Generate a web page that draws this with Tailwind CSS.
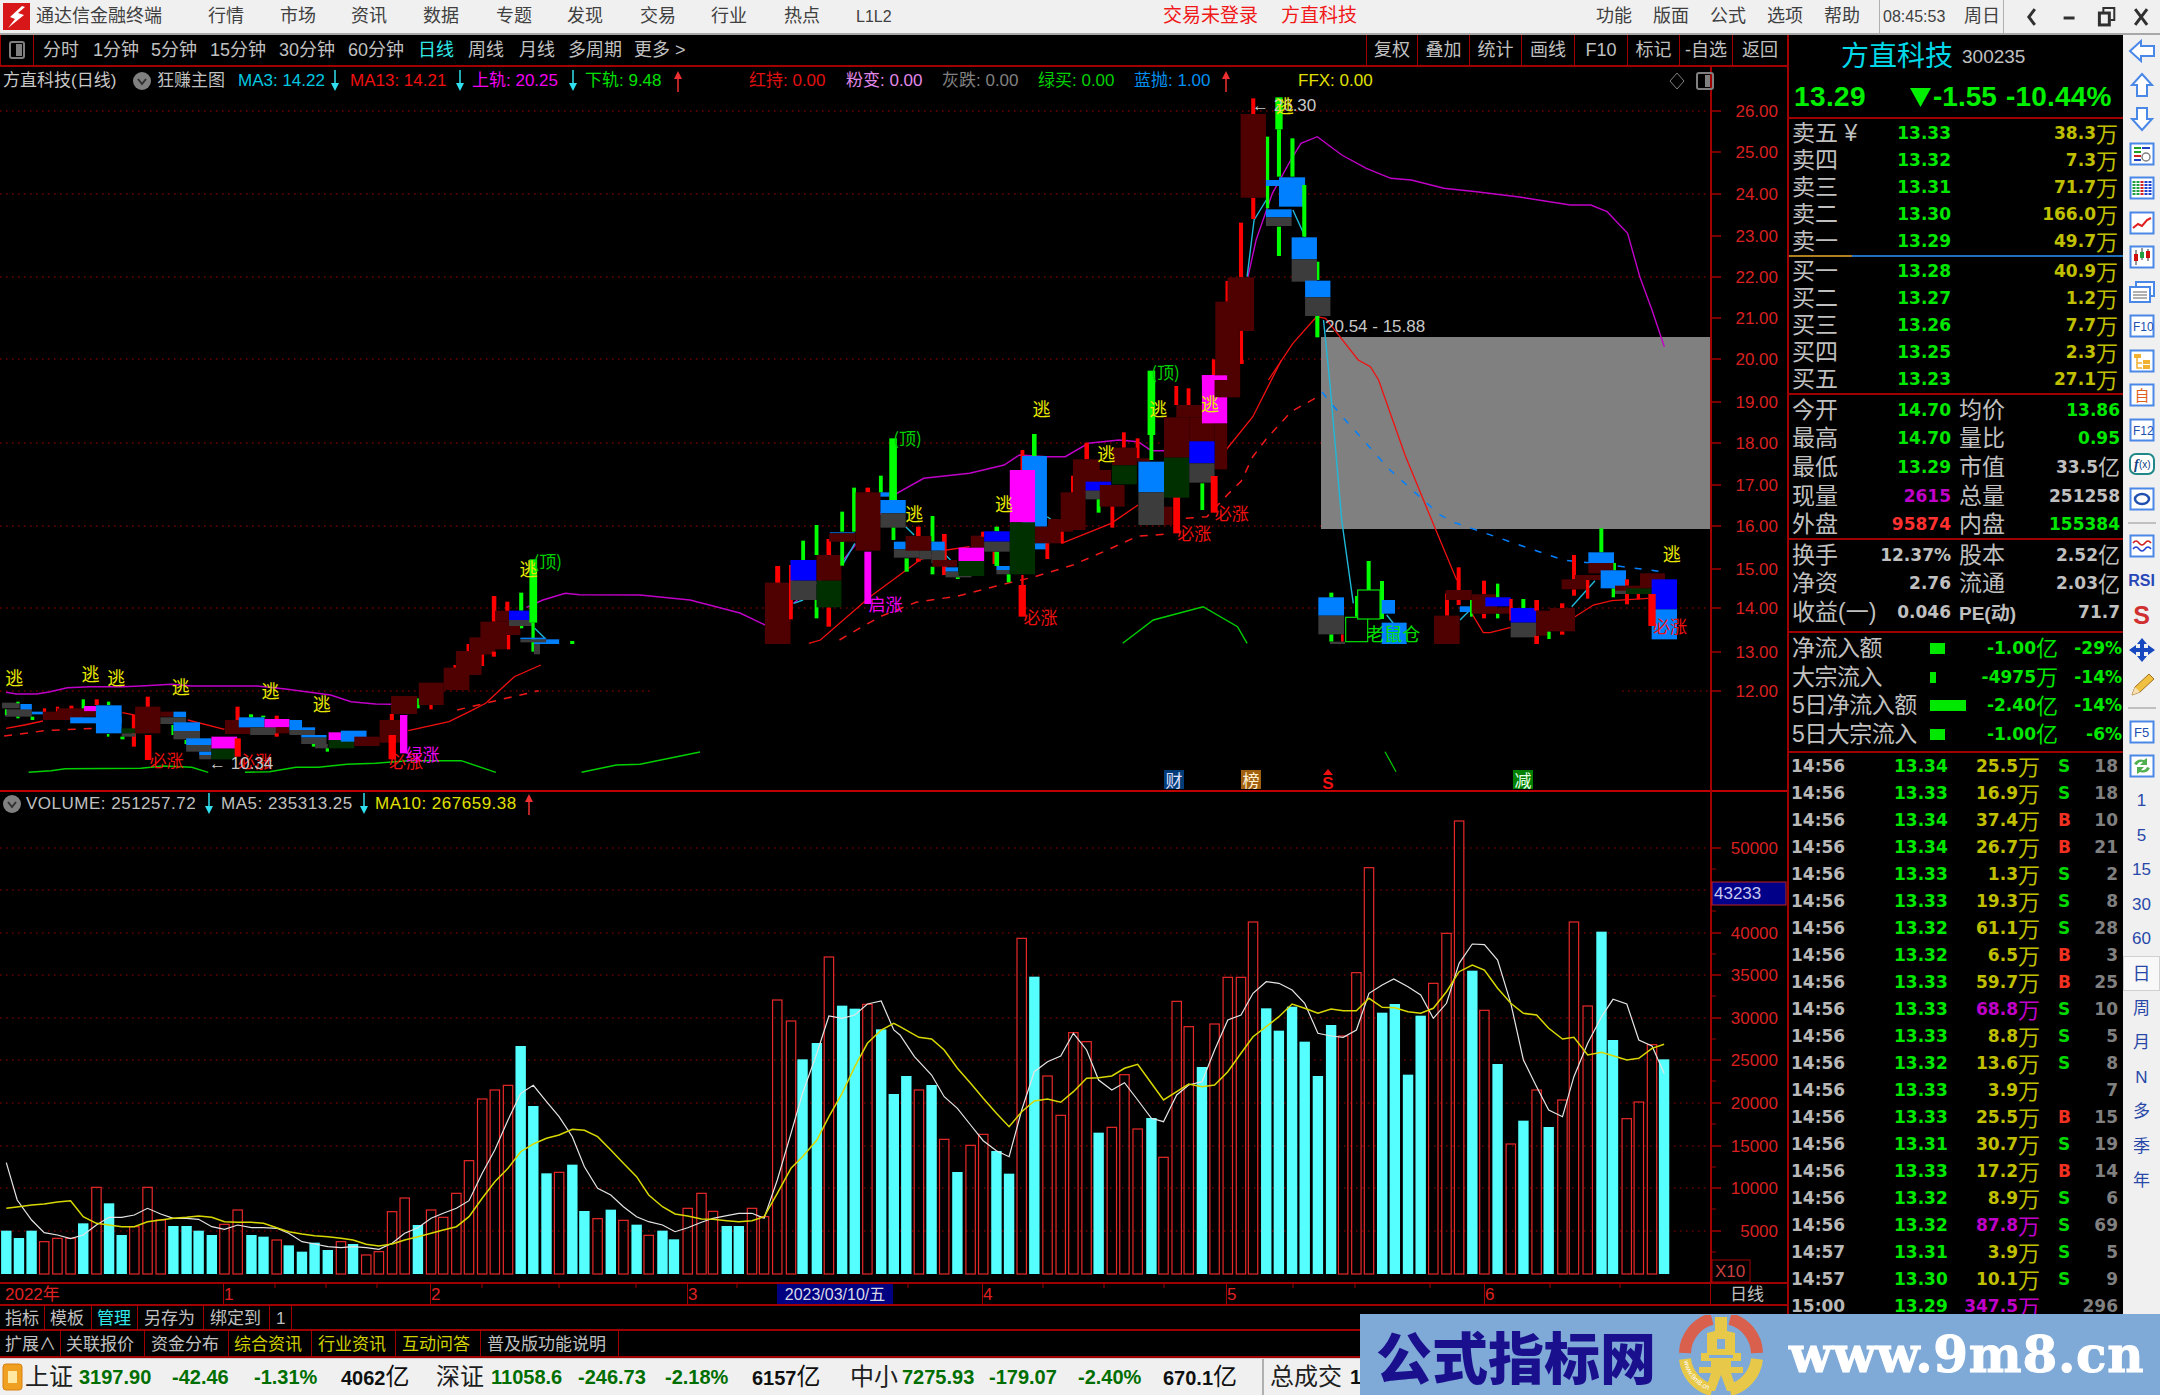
<!DOCTYPE html>
<html>

<head>
    <title>通达信金融终端</title>
    <script src="https://cdn.jsdelivr.net/npm/@tailwindcss/browser@4"></script>
</head>

<body class="bg-black">
    <div class="relative w-[2160px] h-[1395px] overflow-hidden flex flex-col bg-black text-[#c0c0c0] font-['Liberation_Sans','Noto_Sans_CJK_SC',sans-serif]">

        <!-- title bar -->
        <div class="h-[35px] flex items-center bg-[#f0f0f0] border-b-2 border-[#a8a8a8] text-[#404040] text-[18px] whitespace-nowrap">
            <div class="w-[36px] pl-[3px]">
                <svg class="w-[27px] h-[27px]" viewBox="0 0 27 27">
                    <rect width="27" height="27" fill="#d81818" />
                    <path d="M19 3 L7 14 L12 16 L5 25 L21 12 L15 10 L22 4Z" fill="#fff" />
                </svg>
            </div>
            <span class="w-[172px]">通达信金融终端</span>
            <span class="w-[72px]">行情</span>
            <span class="w-[71px]">市场</span>
            <span class="w-[72px]">资讯</span>
            <span class="w-[73px]">数据</span>
            <span class="w-[71px]">专题</span>
            <span class="w-[73px]">发现</span>
            <span class="w-[71px]">交易</span>
            <span class="w-[73px]">行业</span>
            <span class="w-[72px]">热点</span>
            <span class="w-[307px] text-[16px]">L1L2</span>
            <span class="w-[118px] text-[#f01818] text-[19px]">交易未登录</span>
            <span class="w-[315px] text-[#f01818] text-[19px]">方直科技</span>
            <span class="w-[57px]">功能</span>
            <span class="w-[57px]">版面</span>
            <span class="w-[57px]">公式</span>
            <span class="w-[57px]">选项</span>
            <span class="w-[55px]">帮助</span>
            <div class="w-[85px] h-full flex items-center border-l border-[#b0b0b0] pl-[3px] text-[16px]">08:45:53</div>
            <span class="w-[39px]">周日</span>
            <div class="w-[157px] h-full flex items-center border-l border-[#b0b0b0]">
                <svg class="w-[157px] h-[24px]" viewBox="0 0 157 24" fill="none" stroke="#303030" stroke-width="3">
                    <path d="M31 4 L25 12 L31 20" />
                    <path d="M60 13 H71" />
                    <rect x="96" y="8" width="10" height="12" />
                    <path d="M100 7 V3 H111 V15 H107" stroke-width="2" />
                    <path d="M132 4 L144 20 M144 4 L132 20" />
                </svg>
            </div>
        </div>

        <div class="h-[1323px] flex">
            <!-- chart column -->
            <div class="w-[1787px] flex flex-col">
                <div class="h-[32px] flex items-center border-b-2 border-[#a00000] text-[18px] whitespace-nowrap">
                    <div class="w-[34px] h-full flex items-center justify-center border-x border-[#a00000] mr-[9px]">
                        <svg class="w-[18px] h-[20px]" viewBox="0 0 18 20">
                            <rect x="2" y="2" width="14" height="16" rx="2" fill="none" stroke="#808080" stroke-width="2" />
                            <rect x="8" y="4" width="6" height="12" fill="#808080" />
                        </svg>
                    </div>
                    <span class="w-[50px]">分时</span>
                    <span class="w-[58px]">1分钟</span>
                    <span class="w-[59px]">5分钟</span>
                    <span class="w-[69px]">15分钟</span>
                    <span class="w-[69px]">30分钟</span>
                    <span class="w-[70px]">60分钟</span>
                    <span class="w-[50px] text-[#30e8e8]">日线</span>
                    <span class="w-[51px]">周线</span>
                    <span class="w-[49px]">月线</span>
                    <span class="w-[66px]">多周期</span>
                    <span class="w-[732px]">更多 &gt;</span>
                    <span class="w-[51px] h-full flex items-center justify-center border-l border-[#a00000]">复权</span>
                    <span class="w-[52px] h-full flex items-center justify-center border-l border-[#a00000]">叠加</span>
                    <span class="w-[52px] h-full flex items-center justify-center border-l border-[#a00000]">统计</span>
                    <span class="w-[53px] h-full flex items-center justify-center border-l border-[#a00000]">画线</span>
                    <span class="w-[53px] h-full flex items-center justify-center border-l border-[#a00000]">F10</span>
                    <span class="w-[52px] h-full flex items-center justify-center border-l border-[#a00000]">标记</span>
                    <span class="w-[53px] h-full flex items-center justify-center border-l border-[#a00000]">-自选</span>
                    <span class="w-[55px] h-full flex items-center justify-center border-l border-[#a00000]">返回</span>
                </div>

                <!-- price pane -->
                <div class="relative h-[725px] border-b-2 border-[#c00000]">
                    <svg id="price" class="absolute inset-0 w-[1787px] h-[725px]" viewBox="0 67 1787 725"></svg>
                    <div class="relative h-[27px] flex items-center text-[17px] whitespace-nowrap">
                        <span class="w-[133px] pl-[3px] text-[#c8c8c8]">方直科技(日线)</span>
                        <span class="w-[24px]">
                            <svg class="w-[18px] h-[18px]" viewBox="0 0 18 18">
                                <circle cx="9" cy="9" r="9" fill="#808080" />
                                <path d="M5 7 L9 12 L13 7" fill="none" stroke="#303030" stroke-width="2" />
                            </svg>
                        </span>
                        <span class="w-[81px]">狂赚主图</span>
                        <span class="w-[92px] text-[#00c8e0]">MA3: 14.22</span>
                        <span class="w-[20px]"><svg class="w-[10px] h-[22px]" viewBox="0 0 10 22"><path d="M5 0V14" stroke="#30e0f0" stroke-width="1.5" /><path d="M1 13H9L5 21Z" fill="#30e0f0" /></svg></span>
                        <span class="w-[105px] text-[#f01010]">MA13: 14.21</span>
                        <span class="w-[17px]"><svg class="w-[10px] h-[22px]" viewBox="0 0 10 22"><path d="M5 0V14" stroke="#30e0f0" stroke-width="1.5" /><path d="M1 13H9L5 21Z" fill="#30e0f0" /></svg></span>
                        <span class="w-[96px] text-[#f000f0]">上轨: 20.25</span>
                        <span class="w-[17px]"><svg class="w-[10px] h-[22px]" viewBox="0 0 10 22"><path d="M5 0V14" stroke="#30e0f0" stroke-width="1.5" /><path d="M1 13H9L5 21Z" fill="#30e0f0" /></svg></span>
                        <span class="w-[88px] text-[#00e000]">下轨: 9.48</span>
                        <span class="w-[76px]"><svg class="w-[10px] h-[22px]" viewBox="0 0 10 22"><path d="M5 22V8" stroke="#f03030" stroke-width="1.5" /><path d="M1 9H9L5 1Z" fill="#f03030" /></svg></span>
                        <span class="w-[97px] text-[#e01010]">红持: 0.00</span>
                        <span class="w-[96px] text-[#e088e8]">粉变: 0.00</span>
                        <span class="w-[96px] text-[#808080]">灰跌: 0.00</span>
                        <span class="w-[96px] text-[#00d000]">绿买: 0.00</span>
                        <span class="w-[87px] text-[#0090f0]">蓝抛: 1.00</span>
                        <span class="w-[77px]"><svg class="w-[10px] h-[22px]" viewBox="0 0 10 22"><path d="M5 22V8" stroke="#f03030" stroke-width="1.5" /><path d="M1 9H9L5 1Z" fill="#f03030" /></svg></span>
                        <span class="w-[371px] text-[#e0e000]">FFX: 0.00</span>
                        <span class="w-[27px]"><svg class="w-[16px] h-[18px]" viewBox="0 0 16 18"><path d="M8 1L15 9L8 17L1 9Z" fill="none" stroke="#808080" /></svg></span>
                        <span><svg class="w-[18px] h-[18px]" viewBox="0 0 18 18"><rect x="1" y="1" width="16" height="16" rx="2" fill="none" stroke="#808080" stroke-width="2" /><rect x="9" y="3" width="5" height="12" fill="#808080" /></svg></span>
                    </div>
                </div>

                <!-- volume pane -->
                <div class="relative h-[490px]">
                    <svg id="volume" class="absolute inset-0 w-[1787px] h-[490px]" viewBox="0 792 1787 490"></svg>
                    <div class="relative h-[23px] flex items-center text-[17px] tracking-[0.5px] whitespace-nowrap">
                        <span class="w-[26px] pl-[3px]">
                            <svg class="w-[18px] h-[18px]" viewBox="0 0 18 18">
                                <circle cx="9" cy="9" r="9" fill="#808080" />
                                <path d="M5 7 L9 12 L13 7" fill="none" stroke="#303030" stroke-width="2" />
                            </svg>
                        </span>
                        <span class="w-[178px]">VOLUME: 251257.72</span>
                        <span class="w-[17px]"><svg class="w-[10px] h-[22px]" viewBox="0 0 10 22"><path d="M5 0V14" stroke="#30e0f0" stroke-width="1.5" /><path d="M1 13H9L5 21Z" fill="#30e0f0" /></svg></span>
                        <span class="w-[138px]">MA5: 235313.25</span>
                        <span class="w-[16px]"><svg class="w-[10px] h-[22px]" viewBox="0 0 10 22"><path d="M5 0V14" stroke="#30e0f0" stroke-width="1.5" /><path d="M1 13H9L5 21Z" fill="#30e0f0" /></svg></span>
                        <span class="w-[149px] text-[#e0e000]">MA10: 267659.38</span>
                        <span><svg class="w-[10px] h-[22px]" viewBox="0 0 10 22"><path d="M5 22V8" stroke="#f03030" stroke-width="1.5" /><path d="M1 9H9L5 1Z" fill="#f03030" /></svg></span>
                    </div>
                </div>

                <!-- date row -->
                <div class="relative h-[24px] flex border-y-2 border-[#a00000] text-[17px] text-[#e02020] whitespace-nowrap">
                    <svg id="dateticks" class="absolute inset-0 w-[1787px] h-[24px]" viewBox="0 0 1787 24"></svg>
                    <span class="w-[223px] pl-[5px] leading-[22px]">2022年</span>
                    <span class="w-[207px] border-l border-[#a00000] leading-[22px]">1</span>
                    <span class="w-[257px] border-l border-[#a00000] leading-[22px]">2</span>
                    <span class="w-[90px] border-l border-[#a00000] leading-[22px]">3</span>
                    <span class="w-[116px] bg-[#000080] text-[#d8d8e8] text-center leading-[22px] text-[16px]">2023/03/10/五</span>
                    <span class="w-[89px] leading-[22px]"></span>
                    <span class="w-[244px] border-l border-[#a00000] leading-[22px]">4</span>
                    <span class="w-[258px] border-l border-[#a00000] leading-[22px]">5</span>
                    <span class="w-[226px] border-l border-[#a00000] leading-[22px]">6</span>
                    <span class="w-[77px] border-l border-[#a00000] text-[#c0c0c0] pl-[19px] leading-[22px]">日线</span>
                </div>

                <div class="h-[25px] flex border-b-2 border-[#a00000] text-[17px] whitespace-nowrap">
                    <span class="w-[45px] pl-[5px] border-r border-[#a00000]">指标</span>
                    <span class="w-[47px] pl-[5px] border-r border-[#a00000]">模板</span>
                    <span class="w-[46px] pl-[5px] border-r border-[#a00000] text-[#30e8e8]">管理</span>
                    <span class="w-[66px] pl-[6px] border-r border-[#a00000]">另存为</span>
                    <span class="w-[66px] pl-[6px] border-r border-[#a00000]">绑定到</span>
                    <span class="w-[22px] pl-[6px] border-r border-[#a00000]">1</span>
                </div>
                <div class="h-[27px] flex items-stretch border-b-2 border-[#a00000] text-[17px] whitespace-nowrap">
                    <span class="w-[61px] pl-[5px] pt-[1px] border-r border-[#a00000]">扩展∧</span>
                    <span class="w-[84px] pl-[5px] pt-[1px] border-r border-[#a00000]">关联报价</span>
                    <span class="w-[84px] pl-[6px] pt-[1px] border-r border-[#a00000]">资金分布</span>
                    <span class="w-[83px] pl-[5px] pt-[1px] border-r border-[#a00000] text-[#d0d000]">综合资讯</span>
                    <span class="w-[84px] pl-[6px] pt-[1px] border-r border-[#a00000] text-[#d0d000]">行业资讯</span>
                    <span class="w-[85px] pl-[6px] pt-[1px] border-r border-[#a00000] text-[#d0d000]">互动问答</span>
                    <span class="w-[138px] pl-[6px] pt-[1px] border-r border-[#a00000]">普及版功能说明</span>
                </div>
            </div>

            <!-- quote panel -->
            <div class="w-[336px] flex flex-col border-l-2 border-[#a00000] whitespace-nowrap">
                <div class="h-[84px] border-b-2 border-[#a00000]">
                    <div class="h-[42px] flex items-center pt-[2px] pl-[52px]">
                        <span class="w-[121px] text-[28px] leading-none text-[#00d8e8]">方直科技</span>
                        <span class="text-[19px] text-[#c0c0c0]">300235</span>
                    </div>
                    <div class="h-[40px] flex items-center pl-[5px] font-bold text-[#00f000] text-[28px] leading-none font-['Liberation_Sans',sans-serif]">
                        <span class="w-[116px] tracking-[0.4px]">13.29</span>
                        <span class="w-[23px]"><svg class="w-[21px] h-[19px]" viewBox="0 0 21 19"><path d="M0 0H21L10.5 19Z" fill="#00f000" /></svg></span>
                        <span class="w-[73px]">-1.55</span>
                        <span class="w-[116px] tracking-[0.2px]">-10.44%</span>
                    </div>
                </div>
                <div id="sell" class="pt-[1px]"></div>
                <div class="h-[2px] flex"><div class="w-[63px] bg-[#b08020]"></div><div class="flex-1 bg-[#2070c0]"></div></div>
                <div id="buy" class="pt-[1px] h-[138px] border-b-2 border-[#a00000]"></div>
                <div id="stats" class="h-[145px] pt-[1px] border-b-2 border-[#a00000]"></div>
                <div id="extra" class="h-[93px] pt-[1px] border-b-2 border-[#a00000]"></div>
                <div id="flow" class="h-[120px] pt-[1px] border-b-2 border-[#a00000]"></div>
                <div id="ticks" class="overflow-hidden"></div>
            </div>

            <!-- side toolbar -->
            <div id="side" class="w-[37px] bg-[#f0f0f0] flex flex-col text-[#2848a8]"></div>
        </div>

        <!-- status bar -->
        <div class="h-[37px] flex items-center bg-[#f0f0f0] border-t border-[#d0d0d0] whitespace-nowrap text-[20px] leading-none text-[#006e00] font-bold">
            <span class="w-[25px] pl-[2px]">
                <svg class="w-[21px] h-[28px]" viewBox="0 0 21 28">
                    <rect x="1" y="1" width="19" height="26" rx="3" fill="#f0a020" stroke="#d88010" />
                    <rect x="6" y="8" width="9" height="12" fill="#ffe8a0" />
                </svg>
            </span>
            <span class="w-[54px] text-[24px] font-normal text-[#202020]">上证</span>
            <span class="w-[93px]">3197.90</span>
            <span class="w-[82px]">-42.46</span>
            <span class="w-[87px]">-1.31%</span>
            <span class="w-[95px] text-[#101010]">4062<span class="text-[24px] font-normal">亿</span></span>
            <span class="w-[55px] text-[24px] font-normal text-[#202020]">深证</span>
            <span class="w-[87px]">11058.6</span>
            <span class="w-[87px]">-246.73</span>
            <span class="w-[87px]">-2.18%</span>
            <span class="w-[98px] text-[#101010]">6157<span class="text-[24px] font-normal">亿</span></span>
            <span class="w-[52px] text-[24px] font-normal text-[#202020]">中小</span>
            <span class="w-[87px]">7275.93</span>
            <span class="w-[89px]">-179.07</span>
            <span class="w-[85px]">-2.40%</span>
            <span class="w-[99px] text-[#101010]">670.1<span class="text-[24px] font-normal">亿</span></span>
            <div class="h-full border-l-2 border-[#b0b0b0] pl-[6px] w-[88px] flex items-center text-[24px] font-normal text-[#202020]">总成交</div>
            <span class="text-[#101010]">1</span>
        </div>

        <!-- watermark over the window corner -->
        <div class="absolute left-[1360px] top-[1314px] w-[800px] h-[81px] bg-[#7faad8] flex items-center">
            <span class="w-[325px] pl-[16px] text-[56px] leading-none font-black tracking-[0px] text-[#1a0f8c] font-['Noto_Sans_CJK_SC',sans-serif]">公式指标网</span>
            <svg class="w-[84px] h-[80px] shrink-0 -ml-[6px]" viewBox="0 0 84 80">
                <path id="wmarc" d="M5 46 A37 37 0 0 0 42 77" fill="none" />
                <path d="M6 38 A36 36 0 0 1 33 4" fill="none" stroke="#d8604c" stroke-width="12" />
                <path d="M78 38 A36 36 0 0 0 51 4" fill="none" stroke="#d8604c" stroke-width="12" />
                <path d="M6 44 A36 36 0 0 0 33 75" fill="none" stroke="#e8c848" stroke-width="12" />
                <path d="M78 44 A36 36 0 0 1 51 75" fill="none" stroke="#e8c848" stroke-width="12" />
                <path d="M36 2H48V16L56 18V38H62V46H52V52H64V58H52L58 76H48L42 60L36 76H26L32 58H20V52H32V46H22V38H28V18L36 16Z" fill="#e8c848" />
                <path d="M38 24H46V34H38Z M30 40H54V43H30Z" fill="#7faad8" />
                <text font-size="7" fill="#fff" font-family="Liberation Sans"><textPath href="#wmarc">www.9m8.cn</textPath></text>
            </svg>
            <span class="pl-[26px] text-[50px] leading-none font-bold text-white tracking-[0.7px] [-webkit-text-stroke:1px_white] font-['DejaVu_Serif',serif]">www.9m8.cn</span>
        </div>
    </div>

    <script>
        const NS = 'http://www.w3.org/2000/svg';
        const priceSvg = document.getElementById('price');
        const volSvg = document.getElementById('volume');

        // add one svg element
        function add(svg, tag, attrs, text) {
            const e = document.createElementNS(NS, tag);
            Object.keys(attrs).forEach(function (k) { e.setAttribute(k, attrs[k]); });
            if (text) e.textContent = text;
            svg.appendChild(e);
            return e;
        }

        // measured crops of the chart: origin x, origin y, x scale, y scale
        const CROPS = {
            a: [0, 520, 2.45, 3],
            b: [740, 360, 2.613, 3],
            c: [1150, 80, 2.45, 3],
            d: [1300, 520, 3, 3],
            e: [0, 960, 1.742, 3],
            f: [900, 800, 1.742, 3]
        };
        function px(z, x) { return CROPS[z][0] + x / CROPS[z][2]; }
        function py(z, y) { return CROPS[z][1] + y / CROPS[z][3]; }

        const COLORS = { r: '#4f0000', R: '#ff0000', g: '#00ff00', G: '#003000', b: '#0080ff', B: '#0000ff', m: '#ff00ff', k: '#3c3c3c' };

        function rects(z, list) {
            list.trim().split(/\s*;\s*/).forEach(function (s) {
                if (!s) return;
                const p = s.split(' ');
                const x0 = px(z, +p[1]), y0 = py(z, +p[2]), x1 = px(z, +p[3]), y1 = py(z, +p[4]);
                if (p[0] === 'o') {
                    add(priceSvg, 'rect', { x: x0, y: y0, width: x1 - x0, height: y1 - y0, fill: '#000', stroke: '#00e000', 'stroke-width': 1.2 });
                } else {
                    add(priceSvg, 'rect', { x: x0, y: y0, width: x1 - x0, height: y1 - y0, fill: COLORS[p[0]] });
                }
            });
        }

        function pts(z, s) {
            return s.trim().split(/\s+/).map(function (q) {
                const p = q.split(',');
                return px(z, +p[0]).toFixed(1) + ',' + py(z, +p[1]).toFixed(1);
            }).join(' ');
        }

        function line(svg, points, color, w, dash) {
            const a = { points: points, fill: 'none', stroke: color, 'stroke-width': w };
            if (dash) a['stroke-dasharray'] = dash;
            add(svg, 'polyline', a);
        }

        // ---- price pane ----
        [111, 194, 277, 359, 443, 526, 608].forEach(function (y) {
            add(priceSvg, 'line', { x1: 0, x2: 1711, y1: y, y2: y, stroke: '#b00000', 'stroke-dasharray': '1.5 4.5', 'stroke-width': 1.2 });
        });
        add(priceSvg, 'line', { x1: 0, x2: 650, y1: 691, y2: 691, stroke: '#b00000', 'stroke-dasharray': '1.5 4.5', 'stroke-width': 1.2 });
        add(priceSvg, 'line', { x1: 1622, x2: 1711, y1: 691, y2: 691, stroke: '#b00000', 'stroke-dasharray': '1.5 4.5', 'stroke-width': 1.2 });

        add(priceSvg, 'rect', { x: 1321, y: 337, width: 390, height: 192, fill: '#808080' });

        // upper band
        const MAG = '#c000c8';
        line(priceSvg, pts('a', '15,517 40,522 90,522 120,516 165,503 220,500 300,500 345,498 420,493 470,498 630,498 700,507 750,515 810,525 860,545 920,552 960,553'), MAG, 1.4);
        line(priceSvg, pts('a', '1290,262 1330,240 1385,220 1420,224 1568,225') + ' 690,600 740,613 765,625', MAG, 1.4);
        line(priceSvg, pts('b', '140,730 270,600 410,400 480,355 600,340 690,315 730,285 800,290 850,290 910,250 990,240 1040,245 1075,272 1140,272'), MAG, 1.4);
        line(priceSvg, pts('c', '240,590 260,480 300,340 345,240 370,190 410,170 470,225 530,265 590,295 640,300 720,325 800,335 900,350 1030,375 1080,375 1120,395 1170,460 1200,590 1230,690 1260,800'), MAG, 1.4);

        // lower band
        const GRN = '#00d000';
        line(priceSvg, pts('a', '70,757 125,752 160,746 345,745 400,738 470,742 510,757'), GRN, 1.4);
        line(priceSvg, pts('a', '600,757 660,755 725,742 780,742 850,733 920,730 1000,722 1130,722 1215,757'), GRN, 1.4);
        line(priceSvg, pts('a', '1425,757 1510,735 1568,733') + ' 700,752', GRN, 1.4);
        line(priceSvg, pts('b', '1000,850 1080,780 1210,740 1300,800 1325,850'), GRN, 1.4);
        line(priceSvg, pts('d', '255,695 288,755'), GRN, 1.2);

        // red average
        const RED = '#f01010';
        [['a', '15,625 60,615 105,603'], ['a', '300,578 390,600'], ['a', '460,600 550,628'], ['a', '1000,632 1100,605 1150,575 1190,550 1260,470 1325,435'],
         ['b', '180,850 210,840 340,710 470,600 540,570 600,560'], ['b', '840,550 970,490 1040,435'], ['b', '1270,270 1340,170 1415,0'],
         ['d', '515,280 550,338 570,338 632,322'], ['d', '825,290 880,255 935,242 1045,235']
        ].forEach(function (l) { line(priceSvg, pts(l[0], l[1]), RED, 1.3); });
        line(priceSvg, pts('c', '290,900 350,790 408,710 430,715 510,840 540,860 560,900') + ' 1405,455 ' + pts('d', '395,0 470,180'), RED, 1.3);

        // dashed supports
        line(priceSvg, pts('a', '10,648 110,632 230,625'), '#f01818', 1.5, '8 8');
        line(priceSvg, pts('a', '1120,570 1240,535 1320,512'), '#f01818', 1.5, '8 8');
        line(priceSvg, pts('b', '260,840 335,790 370,768 460,727 570,708 670,678 770,650 870,615 970,565 1040,528 1110,523'), '#f01818', 1.5, '8 8');
        line(priceSvg, pts('b', '1165,475 1220,470 1275,403 1310,363 1340,290 1375,237 1440,155 1510,110'), '#f01818', 1.5, '8 8');
        line(priceSvg, '1322,392 1340,414 1390,470 1440,515 ' + pts('d', '465,8 630,65 790,120 970,140 1100,157'), '#0080ff', 1.5, '7 10');

        // cyan fast line, only its visible pieces
        const CYN = '#20b8d8';
        [['c', '238,590 255,420 285,360'], ['c', '350,390 380,470'], ['d', '480,300 505,275'], ['d', '815,260 885,182'],
         ['d', '260,285 280,310'], ['b', '140,730 165,720'], ['b', '270,610 300,550'], ['b', '433,500 455,525'], ['b', '537,585 550,600'], ['b', '803,470 812,478'], ['a', '1310,325 1335,355']
        ].forEach(function (l) { line(priceSvg, pts(l[0], l[1]), CYN, 1.4); });
        line(priceSvg, pts('c', '425,720 440,900') + ' ' + pts('d', '125,0 160,250'), CYN, 1.4);

        // candles and indicator boxes
        rects('a', `
            k 5 548 48 565; b 50 552 78 570; k 12 568 78 590; b 78 575 110 583; g 40 545 48 550; g 12 568 16 585; g 75 590 84 600; g 40 590 48 595;
            R 105 565 113 580; R 137 560 145 575; R 170 557 180 570; r 105 575 205 600; r 140 565 240 585;
            g 200 538 208 565; R 232 538 242 555; g 262 545 270 555; m 206 558 268 574; r 206 574 268 590; b 172 592 298 610; b 235 556 298 640;
            R 323 585 333 680; G 298 625 360 640; k 298 640 332 650; g 295 650 305 658; g 262 642 268 650; r 331 560 393 640; R 357 530 367 560; R 355 645 371 720;
            r 393 575 425 590; b 425 575 456 592; k 393 592 456 612; g 420 615 425 645; b 425 607 490 633; k 425 633 490 658;
            b 456 655 518 675; k 456 675 518 695; g 452 660 456 672; b 488 695 518 705; k 488 705 518 718;
            m 518 650 581 686; G 518 686 581 718; R 575 655 590 710; R 577 560 587 600; r 551 600 613 642;
            g 610 583 620 592; g 640 587 650 592; R 673 587 683 597; b 585 592 648 622; k 613 622 676 645; m 648 597 709 622; r 676 622 709 640; R 673 640 683 650;
            b 709 600 740 630; k 709 630 772 645; b 740 622 772 630; k 738 652 800 672; b 738 645 800 652; k 772 672 803 685; g 764 672 772 680; g 798 685 806 695;
            m 805 637 868 660; G 805 660 868 685; b 835 632 898 665; r 868 650 930 678; r 930 600 992 668; R 952 645 970 718; m 980 585 998 700;
            r 958 528 1022 582; R 955 582 965 600; g 1022 535 1028 565; r 1026 488 1087 555; R 1052 555 1060 568; r 1087 443 1150 510;
            R 1111 435 1117 443; r 1117 393 1180 465; R 1180 403 1186 438; R 1143 372 1149 393; r 1150 352 1213 403; R 1205 395 1215 410;
            R 1205 228 1216 305; r 1177 305 1247 388; R 1242 345 1250 388; R 1238 245 1248 275; r 1213 272 1247 305;
            g 1272 218 1282 272; B 1247 272 1297 300; k 1247 300 1308 318; r 1247 318 1275 345; g 1274 318 1282 325;
            g 1297 118 1316 308; g 1302 308 1310 395; k 1308 370 1323 403; b 1275 353 1338 358; b 1308 358 1370 372; k 1275 358 1338 367; g 1397 363 1407 372`);
        rects('b', `
            r 65 668 132 852; R 92 618 105 668; R 128 615 138 778;
            g 160 542 170 600; g 195 495 205 585; g 195 720 205 775; R 226 537 238 585; R 226 742 238 800;
            B 132 600 200 662; k 132 662 200 720; r 200 585 265 662; G 200 662 265 742;
            g 262 455 272 515; g 262 545 272 617; g 293 383 303 515; b 235 517 300 520; r 233 520 302 545;
            R 328 383 340 397; r 302 397 367 572; m 325 575 343 732; g 363 347 373 397; b 367 397 390 410; b 367 420 433 460; k 367 460 433 503; g 390 235 410 420; g 396 503 406 540;
            R 460 500 472 528; R 460 595 472 605; g 430 595 441 635; g 498 468 508 545; g 498 620 508 643; R 528 522 540 645;
            b 402 545 433 568; k 402 568 468 593; r 433 528 500 572; k 468 572 500 598; b 500 545 535 572; k 500 572 535 610; r 503 600 567 620;
            b 537 622 570 635; k 537 635 605 652; g 564 652 574 657; r 603 527 638 563; m 571 563 638 603; G 571 603 638 648;
            R 630 515 638 530; R 660 575 668 612; g 665 500 677 514; g 665 575 677 618; B 638 514 705 545; k 638 545 705 575; b 670 618 705 630; k 670 630 705 643; g 697 643 707 667;
            R 733 270 743 330; g 763 222 775 288; b 737 288 802 500; m 705 330 771 487; G 705 487 771 643; R 735 645 741 675; R 728 675 747 770;
            r 771 500 838 550; b 771 550 802 568; R 798 550 808 597; r 805 477 870 515; R 838 515 846 550;
            r 838 397 903 510; R 865 347 875 397; R 900 248 912 298; r 870 298 940 400; r 903 330 970 365; B 903 365 970 392; k 903 392 970 418; g 932 418 942 458;
            r 940 375 1005 440; R 968 440 978 503; R 998 217 1008 263; R 1034 235 1044 295; r 972 263 1037 316; G 972 316 1037 373; r 1037 295 1072 305;
            g 1070 225 1080 300; g 1065 32 1085 225; b 1041 305 1108 397; k 1041 397 1108 495; r 1108 440 1130 495; R 1132 410 1150 520;
            R 1135 78 1145 135; R 1167 85 1177 135; r 1140 135 1207 172; r 1108 172 1174 293; G 1108 293 1174 413; r 1174 172 1240 245; r 1240 190 1273 328;
            m 1207 45 1273 190; R 1233 0 1241 45; R 1308 0 1316 12; r 1240 0 1307 112;
            B 1174 244 1240 310; k 1174 310 1240 368; g 1203 370 1213 450; R 1230 348 1248 458`);
        rects('c', `
            R 218 428 228 592; R 220 753 228 852; R 185 603 192 665; R 152 838 160 885; r 160 665 220 900; r 190 592 255 753; m 127 886 189 900;
            R 248 55 258 102; R 248 353 258 417; r 222 102 284 353; g 284 170 292 385; g 307 52 325 148; g 311 148 321 290; g 311 440 321 528;
            g 344 175 354 290; b 284 300 316 318; b 316 292 380 380; b 284 388 347 412; k 284 412 347 438; g 373 315 383 470;
            b 347 472 409 538; k 347 538 409 605; g 409 545 415 600; b 380 602 442 652; k 380 652 442 708; g 405 708 415 772`);
        rects('d', `
            g 88 218 100 232; g 88 343 100 365; R 123 343 131 365; b 55 232 132 287; k 55 287 132 343; k 90 365 135 372;
            g 165 228 175 290; g 200 123 212 210; g 240 183 252 297; b 245 240 285 281; b 245 308 320 372;
            o 137 292 203 365; o 173 210 240 297;
            R 435 220 447 287; r 402 287 479 372; R 470 142 482 210; R 470 240 482 255; r 437 210 515 240; b 479 259 514 276;
            R 546 182 558 223; R 546 281 558 295; g 510 240 518 290; r 515 223 592 281; g 588 191 598 232; g 588 281 598 295; r 592 262 632 281; B 556 232 632 259;
            R 628 237 638 302; g 664 237 676 264; B 632 264 708 308; k 632 308 708 352; R 703 240 717 272; R 703 347 717 372; r 708 272 750 347; g 742 335 752 357;
            R 780 250 793 264; R 780 334 793 344; r 750 264 825 334;
            R 816 105 828 178; R 816 208 828 227; r 785 178 862 208; r 825 165 902 180; R 858 180 868 236;
            g 898 25 910 97; b 865 97 942 129; r 865 129 942 160; g 940 129 948 151; g 935 205 945 232; b 902 151 978 205;
            R 975 178 987 197; R 975 222 987 253; r 945 197 1020 222; k 945 212 980 222; R 1010 222 1020 238; G 978 205 1055 222; r 1020 160 1095 205;
            B 1055 178 1131 268; b 1055 268 1131 358; R 1045 222 1067 318`);

        // chart marks
        function mark(z, x, y, text, color, size) {
            add(priceSvg, 'text', { x: px(z, x), y: py(z, y), fill: color, 'font-size': size || 18, 'text-anchor': 'middle', 'dominant-baseline': 'central', 'font-family': 'Noto Sans CJK SC' }, text);
        }
        const YEL = '#e8e800';
        [[ 'a', 35, 470], ['a', 222, 460], ['a', 285, 470], ['a', 443, 497], ['a', 663, 510], ['a', 788, 550], ['a', 1295, 145],
         ['b', 788, 145], ['b', 1093, 145], ['b', 1228, 130], ['b', 957, 280], ['b', 455, 460], ['b', 690, 430], ['d', 1115, 100]
        ].forEach(function (m) { mark(m[0], m[1], m[2], '逃', YEL, 18); });
        [['a', 408, 718], ['a', 625, 722], ['a', 995, 720], ['b', 785, 768], ['b', 1187, 518], ['b', 1285, 457], ['d', 1110, 315]
        ].forEach(function (m) { mark(m[0], m[1], m[2], '必涨', '#f01010', 17); });
        mark('b', 380, 730, '启涨', '#f000f0', 17);
        mark('a', 1035, 700, '绿涨', '#f000f0', 17);
        [['a', 1342, 120], ['b', 438, 233], ['b', 1112, 33]].forEach(function (m) { mark(m[0], m[1], m[2], '(顶)', '#00d000', 17); });
        mark('d', 280, 340, '老鼠仓', '#00e000', 18);

        add(priceSvg, 'text', { x: 209, y: 763, fill: '#c8c8c8', 'font-size': 17, 'dominant-baseline': 'central', 'font-family': 'Liberation Sans' }, '← 10.34');
        add(priceSvg, 'text', { x: 1252, y: 105, fill: '#c8c8c8', 'font-size': 17, 'dominant-baseline': 'central', 'font-family': 'Liberation Sans' }, '← 26.30');
        mark('c', 330, 75, '逃', YEL, 18);
        add(priceSvg, 'text', { x: 1325, y: 326, fill: '#c8c8c8', 'font-size': 17, 'dominant-baseline': 'central', 'font-family': 'Liberation Sans' }, '20.54 - 15.88');

        // bottom signals
        [[1174, '财', '#003c78', '#e0e0ff'], [1251, '榜', '#a06010', '#fff0d0'], [1523, '减', '#008000', '#e8ffe8']].forEach(function (s) {
            add(priceSvg, 'rect', { x: s[0] - 10, y: 770, width: 20, height: 19, fill: s[2] });
            add(priceSvg, 'text', { x: s[0], y: 779, fill: s[3], 'font-size': 17, 'text-anchor': 'middle', 'dominant-baseline': 'central', 'font-family': 'Noto Sans CJK SC' }, s[1]);
        });
        add(priceSvg, 'path', { d: 'M1323 775 L1328 769 L1333 775Z', fill: '#f01010' });
        add(priceSvg, 'text', { x: 1328, y: 783, fill: '#f01010', 'font-size': 17, 'font-weight': 'bold', 'text-anchor': 'middle', 'dominant-baseline': 'central', 'font-family': 'Liberation Sans' }, 'S');

        // price axis
        add(priceSvg, 'line', { x1: 1711, x2: 1711, y1: 67, y2: 792, stroke: '#a00000', 'stroke-width': 2 });
        [[26, 111], [25, 152], [24, 194], [23, 236], [22, 277], [21, 318], [20, 359], [19, 402], [18, 443], [17, 485], [16, 526], [15, 569], [14, 608], [13, 652], [12, 691]].forEach(function (t) {
            add(priceSvg, 'line', { x1: 1711, x2: 1721, y1: t[1], y2: t[1], stroke: '#a00000', 'stroke-width': 1.5 });
            add(priceSvg, 'text', { x: 1778, y: t[1], fill: '#d82020', 'font-size': 17, 'text-anchor': 'end', 'dominant-baseline': 'central', 'font-family': 'Liberation Sans' }, t[0].toFixed(2));
        });

        // ---- volume pane ----
        const VOL_TICKS = [[50000, 848], [45000, 890], [40000, 933], [35000, 975], [30000, 1018], [25000, 1060], [20000, 1103], [15000, 1146], [10000, 1188], [5000, 1231]];
        VOL_TICKS.forEach(function (t) {
            add(volSvg, 'line', { x1: 0, x2: 1711, y1: t[1], y2: t[1], stroke: '#a00000', 'stroke-dasharray': '1.5 4.5', 'stroke-width': 1.2 });
        });

        function bars(z, s) {
            s.trim().split(/\s+/).forEach(function (q) {
                const m = q.match(/(\d+)([cr])(-?\d+)/);
                const x = px(z, +m[1]), y = py(z, +m[3]);
                if (m[2] === 'c') {
                    add(volSvg, 'rect', { x: x - 5.2, y: y, width: 10.4, height: 1274 - y, fill: '#55ffff' });
                } else {
                    add(volSvg, 'rect', { x: x - 4.7, y: y, width: 9.4, height: 1274 - y, fill: 'none', stroke: '#e82828', 'stroke-width': 1.2 });
                }
            });
        }
        bars('e', `11c812 33c834 55c812 77r845 100r835 123r835 145c790 168r682 190c730 212c825 234r800 257r682 280r780 302c798 325c798 346c812 369c825
            391r793 414r750 438c825 459c830 482r840 503c856 526c875 548c848 571c870 594r845 615c852 638r885 660r875 683r755 705r714 728c795 751r750 772r772 795r700 817r602
            840r417 862r390 885r376 907c258 929c438 952c640 974r637 997c614 1018c753 1041r776 1064c749 1086r781 1109c794 1130r826 1154c812 1174c838 1198r745 1222r700 1242r754
            1266c798 1287c798 1310r745 1331r770 1354r120 1378r183 1398c298 1423c249 1444r-9 1467c137 1489c146 1511r133 1535c208 1557c402`);
        bars('f', `11c828 33r870 55c855 77r1018 100c1116 123r1036 145r1003 168c1053 190c1121 212r415 234c530 257r828 280r946 302r698 325r725 346c998 369r982 391r824 414r987 438c954
            459r1072 482r604 503r680 526c801 548r672 571r532 594r532 615r366 638c625 660c692 683c620 705c725 728c828 751c675 772r708 795r518 817r203 840c638 862c612 885c824 907c647
            929r550 952r400 974r63 997c512 1018r631 1041c792 1064r1032 1086c962 1109r870 1130c981 1154r900 1174r366 1198r618 1222c395 1242c720 1266r956 1287r906 1310r734 1331c778`);

        const white = pts('e', `11,608 30,720 55,780 77,818 100,825 123,836 145,825 168,795 190,772 212,772 234,765 257,745 280,762 302,775 325,775 346,778 369,800 391,808 414,795 438,803 459,803 482,805 503,820 526,845 548,852 571,860 594,863 615,860 638,863 660,868 683,850 705,820 728,803 751,775 772,760 795,745 817,722 840,640 862,570 885,480 907,400 929,376 952,425 974,470 997,530 1018,620 1041,685 1064,705 1086,740 1109,770 1130,785 1154,795 1176,815 1198,803 1222,787 1242,775 1266,767 1287,760 1310,760 1331,775 1354,660 1378,520 1398,400 1423,280 1444,168 1467,175 1489,165 1511,132 1535,123 1557,210`)
            + ' ' + pts('f', `0,705 25,770 55,825 77,890 100,925 123,975 145,1022 168,1052 190,1070 212,930 234,815 257,785 280,768 302,700 325,750 346,840 369,870 391,848 414,900 438,955 459,965 482,885 503,855 526,845 548,750 571,660 594,645 615,580 638,545 660,550 683,570 705,610 728,700 751,708 772,712 795,690 817,580 840,555 860,537 885,560 907,585 929,655 952,610 974,490 997,432 1018,434 1041,480 1064,610 1086,780 1109,860 1130,930 1154,950 1174,830 1198,730 1222,650 1242,598 1266,612 1287,720 1310,738 1331,820`);
        const yellow = pts('e', `11,745 33,740 55,735 77,732 100,726 123,722 145,770 168,790 190,795 212,800 234,800 257,785 280,780 302,775 325,772 346,768 369,772 391,785 414,787 438,787 459,790 482,803 503,815 526,822 548,827 571,830 594,835 615,840 638,853 660,858 683,852 705,840 728,830 751,820 772,810 795,800 817,770 840,715 862,665 885,625 907,575 929,552 952,535 974,525 997,508 1018,511 1041,530 1064,570 1086,610 1109,650 1130,705 1154,740 1176,762 1198,768 1222,777 1242,778 1266,782 1287,785 1310,782 1331,770 1354,700 1378,625 1398,590 1423,540 1444,470 1467,400 1489,320 1511,250 1535,210 1557,190`)
            + ' ' + pts('f', `0,680 33,712 55,717 77,750 100,805 123,850 145,895 168,940 190,980 212,935 234,903 257,897 280,907 302,875 325,835 346,833 369,828 391,805 414,793 438,850 459,900 482,875 503,852 526,860 548,855 571,815 594,760 615,710 638,680 660,650 683,612 705,625 728,640 751,627 772,632 795,632 817,595 840,622 862,623 885,635 907,640 929,625 952,575 974,515 997,495 1018,510 1041,565 1064,610 1086,640 1109,645 1130,685 1154,717 1174,712 1198,765 1222,757 1242,767 1266,780 1287,775 1310,745 1331,733`);
        line(volSvg, white, '#e4e4e4', 1.2);
        line(volSvg, yellow, '#d8d800', 1.5);

        add(volSvg, 'line', { x1: 1711, x2: 1711, y1: 792, y2: 1282, stroke: '#a00000', 'stroke-width': 2 });
        VOL_TICKS.forEach(function (t) {
            add(volSvg, 'line', { x1: 1711, x2: 1721, y1: t[1], y2: t[1], stroke: '#a00000', 'stroke-width': 1.5 });
            add(volSvg, 'line', { x1: 1711, x2: 1716, y1: t[1] + 21, y2: t[1] + 21, stroke: '#a00000' });
            if (t[0] !== 45000) {
                add(volSvg, 'text', { x: 1778, y: t[1], fill: '#d82020', 'font-size': 17, 'text-anchor': 'end', 'dominant-baseline': 'central', 'font-family': 'Liberation Sans' }, String(t[0]));
            }
        });
        add(volSvg, 'rect', { x: 1712, y: 882, width: 74, height: 23, fill: '#000088', stroke: '#c02020' });
        add(volSvg, 'text', { x: 1714, y: 893, fill: '#c8c8f0', 'font-size': 17, 'dominant-baseline': 'central', 'font-family': 'Liberation Sans' }, '43233');
        add(volSvg, 'rect', { x: 1712, y: 1260, width: 38, height: 22, fill: '#000', stroke: '#a00000' });
        add(volSvg, 'text', { x: 1715, y: 1271, fill: '#c84040', 'font-size': 17, 'dominant-baseline': 'central', 'font-family': 'Liberation Sans' }, 'X10');

        // small month-division ticks on the date row
        const dt = document.getElementById('dateticks');
        [275, 326, 377, 482, 559, 636, 737, 908, 1043, 1104, 1164, 1293, 1355, 1430, 1550, 1620].forEach(function (x) {
            add(dt, 'line', { x1: x, x2: x, y1: 0, y2: 4, stroke: '#a00000' });
        });

        // ---- quote panel ----
        const DJ = `font-['DejaVu_Sans',sans-serif]`;
        const CJ = `font-['Noto_Sans_CJK_SC',sans-serif]`;
        const UNIT = `text-[22px] font-normal -translate-y-[2px] ${CJ}`;

        function depthRow(label, price, vol) {
            return `<div class="h-[27px] flex items-center pl-[3px] text-[23px] leading-none">
                <span class="w-[67px]">${label}</span>
                <span class="w-[92px] text-right text-[17px] font-bold text-[#00e800] ${DJ}">${price}</span>
                <span class="flex-1 pr-[5px] flex items-center justify-end text-[17px] font-bold text-[#c0c000] ${DJ}">${vol}<span class="${UNIT}">万</span></span>
            </div>`;
        }
        document.getElementById('sell').innerHTML = [
            ['卖五 ¥', '13.33', '38.3'], ['卖四', '13.32', '7.3'], ['卖三', '13.31', '71.7'], ['卖二', '13.30', '166.0'], ['卖一', '13.29', '49.7']
        ].map(function (r) { return depthRow(r[0], r[1], r[2]); }).join('');
        document.getElementById('buy').innerHTML = [
            ['买一', '13.28', '40.9'], ['买二', '13.27', '1.2'], ['买三', '13.26', '7.7'], ['买四', '13.25', '2.3'], ['买五', '13.23', '27.1']
        ].map(function (r) { return depthRow(r[0], r[1], r[2]); }).join('');

        const TONE = { g: 'text-[#00e800]', w: 'text-[#c0c0c0]', m: 'text-[#c000c8]', r: 'text-[#ff3030]' };
        function statRow(a, av, ac, b, bv, bc, unit) {
            return `<div class="h-[28.6px] flex items-center pl-[3px] text-[23px] leading-none">
                <span class="w-[67px]">${a}</span>
                <span class="w-[92px] text-right text-[17px] font-bold ${DJ} ${TONE[ac]}">${av}</span>
                <span class="w-[8px]"></span><span class="w-[64px]">${b}</span>
                <span class="flex-1 pr-[3px] flex items-center justify-end text-[17px] font-bold ${DJ} ${TONE[bc]}">${bv}${unit ? `<span class="${UNIT}">${unit}</span>` : ''}</span>
            </div>`;
        }
        document.getElementById('stats').innerHTML = [
            statRow('今开', '14.70', 'g', '均价', '13.86', 'g'),
            statRow('最高', '14.70', 'g', '量比', '0.95', 'g'),
            statRow('最低', '13.29', 'g', '市值', '33.5', 'w', '亿'),
            statRow('现量', '2615', 'm', '总量', '251258', 'w'),
            statRow('外盘', '95874', 'r', '内盘', '155384', 'g')
        ].join('');
        document.getElementById('extra').innerHTML = [
            statRow('换手', '12.37%', 'w', '股本', '2.52', 'w', '亿'),
            statRow('净资', '2.76', 'w', '流通', '2.03', 'w', '亿'),
            statRow('收益(一)', '0.046', 'w', `<span class="font-bold text-[19px]">PE(动)</span>`, '71.7', 'w')
        ].join('');

        document.getElementById('flow').innerHTML = [
            ['净流入额', 'w-[15px]', '-1.00', '亿', '-29%'],
            ['大宗流入', 'w-[6px]', '-4975', '万', '-14%'],
            ['5日净流入额', 'w-[36px]', '-2.40', '亿', '-14%'],
            ['5日大宗流入', 'w-[15px]', '-1.00', '亿', '-6%']
        ].map(function (r) {
            return `<div class="h-[28.7px] flex items-center pl-[3px] text-[23px] leading-none">
                <span class="w-[138px] tracking-[-0.5px]">${r[0]}</span>
                <span class="w-[45px]"><span class="block h-[11px] bg-[#00e800] ${r[1]}"></span></span>
                <span class="w-[83px] flex items-center justify-end text-[17px] font-bold text-[#00e800] ${DJ}">${r[2]}<span class="${UNIT}">${r[3]}</span></span>
                <span class="flex-1 pr-[1px] text-right text-[17px] font-bold text-[#00e800] ${DJ}">${r[4]}</span>
            </div>`;
        }).join('');

        const TICKS = [
            ['14:56', '13.34', '25.5', 'S', '18'], ['14:56', '13.33', '16.9', 'S', '18'], ['14:56', '13.34', '37.4', 'B', '10'], ['14:56', '13.34', '26.7', 'B', '21'],
            ['14:56', '13.33', '1.3', 'S', '2'], ['14:56', '13.33', '19.3', 'S', '8'], ['14:56', '13.32', '61.1', 'S', '28'], ['14:56', '13.32', '6.5', 'B', '3'],
            ['14:56', '13.33', '59.7', 'B', '25'], ['14:56', '13.33', '68.8', 'S', '10', 1], ['14:56', '13.33', '8.8', 'S', '5'], ['14:56', '13.32', '13.6', 'S', '8'],
            ['14:56', '13.33', '3.9', '', '7'], ['14:56', '13.33', '25.5', 'B', '15'], ['14:56', '13.31', '30.7', 'S', '19'], ['14:56', '13.33', '17.2', 'B', '14'],
            ['14:56', '13.32', '8.9', 'S', '6'], ['14:56', '13.32', '87.8', 'S', '69', 1], ['14:57', '13.31', '3.9', 'S', '5'], ['14:57', '13.30', '10.1', 'S', '9'],
            ['15:00', '13.29', '347.5', '', '296', 1]
        ];
        document.getElementById('ticks').innerHTML = TICKS.map(function (t) {
            const volTone = t[5] ? 'text-[#c000c8]' : 'text-[#c0c000]';
            const flagTone = t[3] === 'B' ? 'text-[#f03020]' : 'text-[#00d800]';
            return `<div class="h-[27px] flex items-center text-[17px] leading-none font-bold ${DJ}">
                <span class="w-[105px] pl-[2px] text-[#b8b8b8]">${t[0]}</span>
                <span class="w-[52px] text-[#00e800]">${t[1]}</span>
                <span class="w-[94px] flex items-center justify-end ${volTone}">${t[2]}<span class="${UNIT}">万</span></span>
                <span class="w-[18px]"></span>
                <span class="w-[20px] ${flagTone}">${t[3]}</span>
                <span class="w-[40px] text-right text-[#808080]">${t[4]}</span>
            </div>`;
        }).join('');

        // ---- side toolbar ----
        function frame(inner) {
            return '<svg class="w-[26px] h-[24px]" viewBox="0 0 26 24"><rect x="1.5" y="1.5" width="23" height="21" fill="#fff" stroke="#4a88e8" stroke-width="2" />' + inner + '</svg>';
        }
        const arrow = function (d) { return '<svg class="w-[28px] h-[26px]" viewBox="0 0 28 26"><path d="' + d + '" fill="#fff" stroke="#4a88e8" stroke-width="2" /></svg>'; };
        const SIDE = [
            arrow('M2 13 L13 3 V8 H26 V18 H13 V23Z'),
            arrow('M14 2 L24 13 H19 V24 H9 V13 H4Z'),
            arrow('M14 24 L24 13 H19 V2 H9 V13 H4Z'),
            frame('<path d="M5 6h7M5 10h7" stroke="#20a020" stroke-width="2" /><path d="M5 14h7" stroke="#d02020" stroke-width="2" /><path d="M5 18h7M13 6h8" stroke="#2040c0" stroke-width="2" /><circle cx="17" cy="15" r="4" fill="none" stroke="#808080" stroke-width="1.5" />'),
            frame('<path d="M5 5v14M9 5v14" stroke="#20a040" stroke-width="3" stroke-dasharray="2 1" /><path d="M13 5v14" stroke="#d02020" stroke-width="3" stroke-dasharray="2 1" /><path d="M17 5v14M21 5v14" stroke="#2040d0" stroke-width="3" stroke-dasharray="2 1" />'),
            frame('<path d="M4 17 L9 13 L13 15 L18 9 L22 7" fill="none" stroke="#e02020" stroke-width="2" />'),
            frame('<path d="M7 5v15M13 3v12M19 4v12" stroke="#303030" /><rect x="5" y="9" width="4" height="7" fill="#d01010" /><rect x="11" y="7" width="4" height="6" fill="#20a040" /><rect x="17" y="6" width="4" height="7" fill="#d01010" />'),
            '<svg class="w-[28px] h-[24px]" viewBox="0 0 28 24"><rect x="8" y="2" width="18" height="14" fill="#fff" stroke="#4a88e8" stroke-width="2" /><rect x="2" y="7" width="20" height="15" fill="#fff" stroke="#4a88e8" stroke-width="2" /><path d="M5 12h14M5 15h14M5 18h14" stroke="#606060" /></svg>',
            frame('<text x="4" y="16.5" font-size="12" fill="#2050b0" font-family="Liberation Sans">F10</text>'),
            frame('<rect x="5" y="5" width="7" height="4" fill="#f0b030" /><path d="M8 9v10h5M8 14h5" stroke="#f0b030" stroke-width="1.5" fill="none" /><rect x="14" y="11" width="7" height="4" fill="#f0b030" /><rect x="14" y="16" width="7" height="4" fill="#f0b030" />'),
            frame('<text x="13" y="18" font-size="15" fill="#e06020" text-anchor="middle" font-family="Noto Sans CJK SC">自</text>'),
            frame('<text x="4" y="16.5" font-size="12" fill="#2050b0" font-family="Liberation Sans">F12</text>'),
            '<svg class="w-[28px] h-[24px]" viewBox="0 0 28 24"><rect x="2" y="2" width="24" height="20" rx="6" fill="#fff" stroke="#208888" stroke-width="2" /><text x="6" y="17" font-size="14" font-style="italic" font-weight="bold" fill="#104080" font-family="Liberation Serif">f</text><text x="11" y="16" font-size="10" fill="#104080" font-family="Liberation Sans">(x)</text></svg>',
            frame('<ellipse cx="13" cy="12" rx="7" ry="5" fill="none" stroke="#2050b0" stroke-width="2.5" />'),
            'sep',
            frame('<path d="M4 9q3-4 6 0t6 0t6 0" fill="none" stroke="#d02020" stroke-width="1.5" /><path d="M4 15q3-4 6 0t6 0t6 0" fill="none" stroke="#2040d0" stroke-width="1.5" />'),
            '<span class="text-[16px] font-black text-[#2848b8]">RSI</span>',
            '<span class="text-[25px] font-black text-[#d03030] leading-none">S</span>',
            '<svg class="w-[28px] h-[26px]" viewBox="0 0 28 26"><path d="M14 1L19 7H16V11H20V8L27 13L20 18V15H16V19H19L14 25L9 19H12V15H8V18L1 13L8 8V11H12V7H9Z" fill="#1848c0" /></svg>',
            '<svg class="w-[28px] h-[26px]" viewBox="0 0 28 26"><path d="M4 24 L7 16 L21 3 L26 8 L12 21Z" fill="#f0c040" stroke="#a07020" /><path d="M4 24 L7 16 L12 21Z" fill="#f8e0b0" /></svg>',
            'sep',
            frame('<text x="5" y="16.5" font-size="13" fill="#2050b0" font-family="Liberation Sans">F5</text>'),
            frame('<path d="M5 10 Q8 4 15 6 L18 4 V11 H11 L14 8 Q10 7 8 11Z" fill="#50b050" /><path d="M21 14 Q18 20 11 18 L8 20 V13 H15 L12 16 Q16 17 18 13Z" fill="#50b050" />'),
            '1', '5', '15', '30', '60', 'sel:日', '周', '月', 'N', '多', '季', '年'
        ];
        document.getElementById('side').innerHTML = SIDE.map(function (s, i) {
            const base = i === 0 ? 'h-[32.5px] ' : 'h-[34.5px] ';
            if (s === 'sep') {
                return '<div class="h-[13px] flex items-center justify-center"><div class="w-[28px] h-[2px] bg-[#c0c0c0]"></div></div>';
            }
            if (s.indexOf('sel:') === 0) {
                return '<div class="h-[35px] flex items-center justify-center bg-[#f8f8f8] border border-[#d0d0d0] text-[18px] leading-none">' + s.slice(4) + '</div>';
            }
            return '<div class="' + base + 'flex items-center justify-center text-[17px] leading-none">' + s + '</div>';
        }).join('');
    </script>
</body>

</html>
